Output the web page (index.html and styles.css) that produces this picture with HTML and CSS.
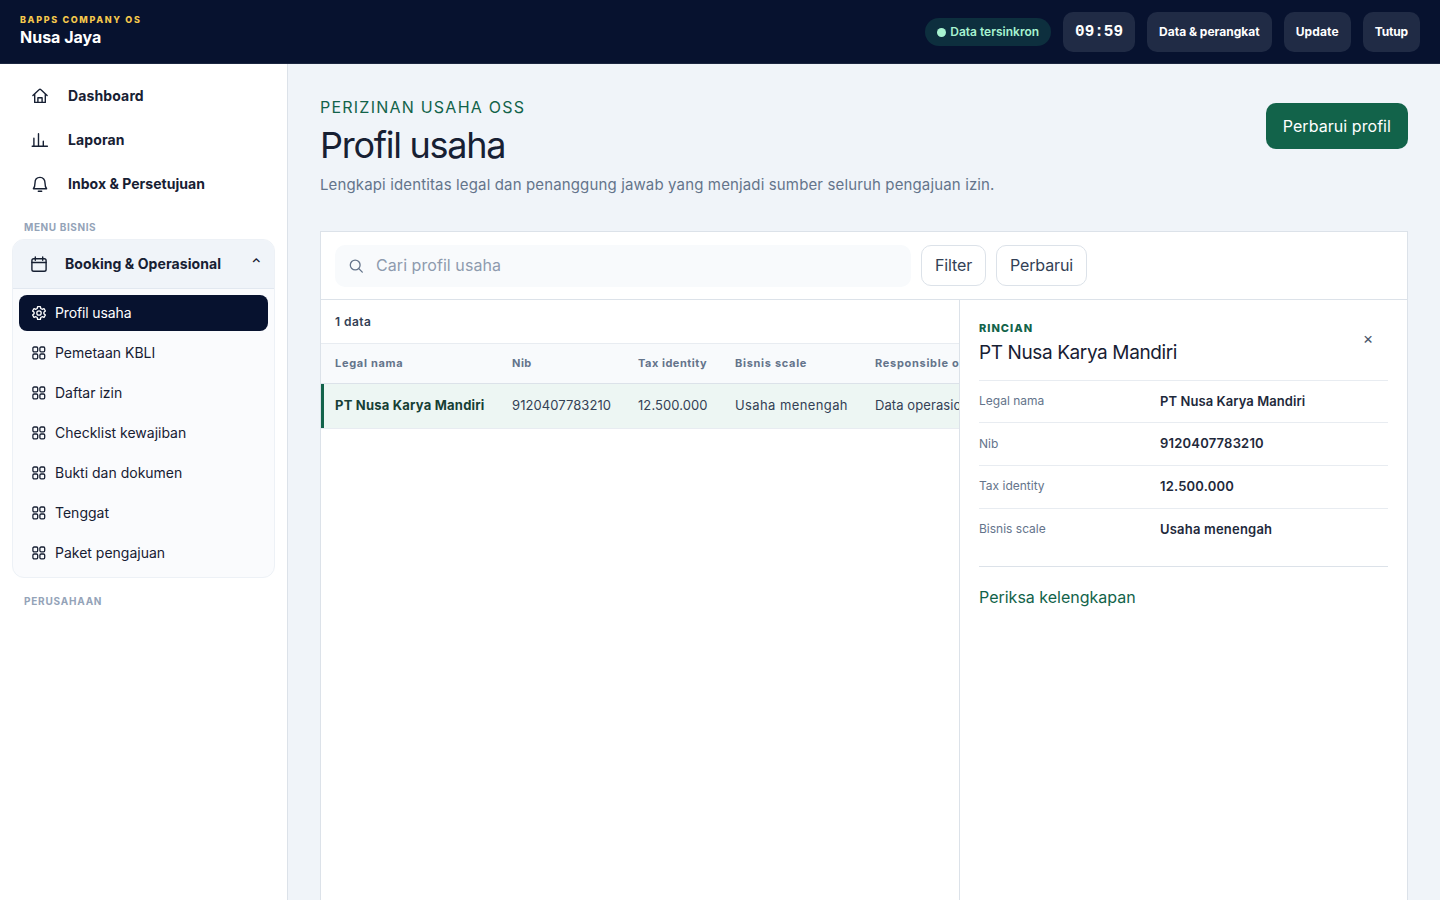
FILE: index.html
```html
<!DOCTYPE html>
<html lang="id">
<head>
    <meta charset="UTF-8">
    <meta name="viewport" content="width=device-width, initial-scale=1.0">
    <title>Profil usaha - Nusa Jaya</title>
    <link rel="stylesheet" href="styles.css">
</head>
<body>
    <svg class="sprite" aria-hidden="true">
        <symbol id="icon-grid" viewBox="0 0 16 16">
            <rect x="1.9" y="2" width="4.8" height="4.8" rx="1.2"/>
            <rect x="8.9" y="2" width="4.8" height="4.8" rx="1.2"/>
            <rect x="1.9" y="9" width="4.8" height="4.8" rx="1.2"/>
            <rect x="8.9" y="9" width="4.8" height="4.8" rx="1.2"/>
        </symbol>
    </svg>

    <header class="topbar">
        <div class="brand">
            <span>BAPPS COMPANY OS</span>
            <strong>Nusa Jaya</strong>
        </div>
        <div class="topbar-actions">
            <span class="sync"><i></i>Data tersinkron</span>
            <time class="clock">09:59</time>
            <button>Data &amp; perangkat</button>
            <button class="update">Update</button>
            <button class="close">Tutup</button>
        </div>
    </header>

    <div class="layout">
        <aside class="sidebar">
            <nav>
                <a class="nav-item" href="#dashboard">
                    <svg viewBox="0 0 18 18"><path d="M1.900 8.500 8.300 2.600a1 1 0 0 1 1.400 0l6.400 5.900M3.700 7.200v8.200h10.600V7.200M6.900 15.400v-4.700h4.200v4.700"/></svg>
                    Dashboard
                </a>
                <a class="nav-item" href="#laporan">
                    <svg viewBox="0 0 18 18"><path d="M1.200 15.200h15.200M2.900 15V7.200M7.500 15V2.800M12.300 15v-4.800"/></svg>
                    Laporan
                </a>
                <a class="nav-item tight" href="#inbox">
                    <svg viewBox="0 0 18 18"><path d="M2.400 13.700h13.200c-1.200-1.500-1.600-3-1.600-5.700C14 4.600 12.200 2.400 9 2.400S4 4.600 4 8c0 2.700-.4 4.200-1.600 5.700zM7.300 16.300h3.400"/></svg>
                    Inbox &amp; Persetujuan
                </a>
            </nav>

            <p class="nav-label">MENU BISNIS</p>
            <div class="group">
                <button class="group-head">
                    <svg viewBox="0 0 18 18"><rect x="1.900" y="3.800" width="14.200" height="12.400" rx="1.800"/><path d="M1.900 7.500h14.200M5.300 2v3.200M12.700 2v3.200"/></svg>
                    <span>Booking &amp; Operasional</span>
                    <b>⌃</b>
                </button>
                <div class="group-list">
                    <a class="active" href="#profil">
                        <svg viewBox="0 0 16 16"><path d="M6.600 1.600h2.800l.4 1.900 1.300.8 1.900-.7 1.400 2.400-1.500 1.300v1.400l1.500 1.300-1.400 2.400-1.900-.7-1.300.8-.4 1.900H6.600l-.4-1.900-1.300-.8-1.900.7-1.400-2.400 1.500-1.300V7.300L1.600 6 3 3.600l1.900.7 1.300-.8z"/><circle cx="8" cy="8" r="2.200"/></svg>
                        Profil usaha
                    </a>
                    <a href="#kbli"><svg><use href="#icon-grid"/></svg>Pemetaan KBLI</a>
                    <a href="#izin"><svg><use href="#icon-grid"/></svg>Daftar izin</a>
                    <a href="#checklist"><svg><use href="#icon-grid"/></svg>Checklist kewajiban</a>
                    <a href="#bukti"><svg><use href="#icon-grid"/></svg>Bukti dan dokumen</a>
                    <a href="#tenggat"><svg><use href="#icon-grid"/></svg>Tenggat</a>
                    <a href="#paket"><svg><use href="#icon-grid"/></svg>Paket pengajuan</a>
                </div>
            </div>
            <p class="nav-label company">PERUSAHAAN</p>
        </aside>

        <main>
            <div class="page-head">
                <div>
                    <p class="eyebrow">PERIZINAN USAHA OSS</p>
                    <h1>Profil usaha</h1>
                    <p class="lead">Lengkapi identitas legal dan penanggung jawab yang menjadi sumber seluruh pengajuan izin.</p>
                </div>
                <button class="primary">Perbarui profil</button>
            </div>

            <section class="panel">
                <div class="toolbar">
                    <label class="search">
                        <svg viewBox="0 0 16 16"><circle cx="7.200" cy="7" r="4.900"/><path d="m10.800 10.600 3.500 3.500"/></svg>
                        <input type="text" placeholder="Cari profil usaha">
                    </label>
                    <button>Filter</button>
                    <button>Perbarui</button>
                </div>
                <div class="split">
                    <div class="records">
                        <div class="count">1 data</div>
                        <table>
                            <thead>
                                <tr>
                                    <th>Legal nama</th>
                                    <th>Nib</th>
                                    <th>Tax identity</th>
                                    <th>Bisnis scale</th>
                                    <th>Responsible officer</th>
                                </tr>
                            </thead>
                            <tbody>
                                <tr>
                                    <td><strong>PT Nusa Karya Mandiri</strong></td>
                                    <td>9120407783210</td>
                                    <td>12.500.000</td>
                                    <td class="wide">Usaha menengah</td>
                                    <td>Data operasional</td>
                                </tr>
                            </tbody>
                        </table>
                    </div>
                    <div class="detail">
                        <div class="detail-head">
                            <div>
                                <span>RINCIAN</span>
                                <h2>PT Nusa Karya Mandiri</h2>
                            </div>
                            <button aria-label="Tutup rincian">×</button>
                        </div>
                        <dl>
                            <div><dt>Legal nama</dt><dd>PT Nusa Karya Mandiri</dd></div>
                            <div><dt>Nib</dt><dd>9120407783210</dd></div>
                            <div><dt>Tax identity</dt><dd>12.500.000</dd></div>
                            <div><dt>Bisnis scale</dt><dd>Usaha menengah</dd></div>
                        </dl>
                        <div class="detail-foot">
                            <a href="#periksa">Periksa kelengkapan</a>
                        </div>
                    </div>
                </div>
            </section>
        </main>
    </div>
</body>
</html>
```
FILE: styles.css
```css
:root {
    --navy: #07122f;
    --green: #12634a;
    --line: #dce2e9;
    --line-soft: #e8ecf1;
    --text: #172033;
    --muted: #64748b;
}

* {
    box-sizing: border-box;
}

body {
    margin: 0;
    height: 100vh;
    overflow: hidden;
    display: flex;
    flex-direction: column;
    font-family: Inter, sans-serif;
    font-size: 16px;
    color: var(--text);
    background: #f0f4f9;
}

p, h1, h2, dl, dd {
    margin: 0;
}

a {
    color: inherit;
    text-decoration: none;
}

button {
    font: inherit;
    cursor: pointer;
}

svg {
    flex: none;
    fill: none;
    stroke: currentColor;
    stroke-width: 1.3;
    stroke-linecap: round;
    stroke-linejoin: round;
}

.sprite {
    display: none;
}

/* Top bar */
.topbar {
    flex: none;
    height: 64px;
    padding: 0 20px;
    display: flex;
    align-items: center;
    justify-content: space-between;
    color: #fff;
    background: var(--navy);
    border-bottom: 1px solid #1b2640;
}

.brand span {
    display: block;
    margin-top: -3px;
    font-size: 9px;
    font-weight: 800;
    line-height: 12px;
    letter-spacing: 1.64px;
    color: #f5c84c;
}

.brand strong {
    display: block;
    margin-top: 1px;
    font-size: 16px;
    line-height: 20px;
}

.topbar-actions {
    display: flex;
    align-items: center;
    gap: 12px;
}

.topbar-actions button,
.clock {
    height: 40px;
    padding: 0 12px;
    border: 0;
    border-radius: 10px;
    color: #fff;
    background: #202b45;
    font-size: 12px;
    font-weight: 700;
}

.topbar-actions .update {
    letter-spacing: 0.12px;
}

.topbar-actions .close {
    letter-spacing: -0.14px;
}

.topbar-actions .clock {
    font-family: "Liberation Mono", monospace;
    font-size: 16px;
    line-height: 40px;
}

.sync {
    height: 28px;
    padding: 0 12px;
    display: flex;
    align-items: center;
    gap: 4px;
    border-radius: 14px;
    font-size: 12px;
    font-weight: 600;
    color: #a7f3d0;
    background: #0d2f3e;
}

.sync i {
    width: 9px;
    height: 9px;
    margin-top: 1px;
    border-radius: 50%;
    background: #a7f3d0;
}

/* Sidebar */
.layout {
    flex: 1;
    min-height: 0;
    display: flex;
}

.sidebar {
    flex: none;
    width: 288px;
    padding: 10px 12px;
    background: #fff;
    border-right: 1px solid var(--line);
}

.nav-item {
    height: 44px;
    padding: 0 0 2px 19px;
    display: flex;
    align-items: center;
    gap: 19px;
    font-size: 14px;
    font-weight: 700;
    letter-spacing: 0.13px;
}

.nav-item.tight {
    letter-spacing: 0.03px;
}

.nav-item svg,
.group-head svg {
    width: 18px;
    height: 18px;
    margin-top: 2px;
    stroke-width: 1.4;
}

.nav-label {
    padding: 15px 12px 6px;
    font-size: 10px;
    font-weight: 700;
    line-height: 12px;
    letter-spacing: 0.6px;
    color: #94a3b8;
}

.nav-label.company {
    padding-top: 17px;
    letter-spacing: 0.78px;
}

.group {
    border: 1px solid #edf1f6;
    border-radius: 12px;
    overflow: hidden;
    background: #fafbfd;
}

.group-head {
    width: 100%;
    height: 49px;
    padding: 0 13px 2px 17px;
    display: flex;
    align-items: center;
    border: 0;
    border-bottom: 1px solid #e2e8f0;
    background: #f0f4f9;
    color: var(--text);
    font-size: 14px;
    font-weight: 700;
    text-align: left;
}

.group-head span {
    flex: 1;
    margin-left: 17px;
    letter-spacing: 0.08px;
}

.group-head b {
    padding-bottom: 2px;
    font-size: 12px;
    font-weight: 600;
}

.group-list {
    padding: 6px;
    display: grid;
    gap: 4px;
}

.group-list a {
    height: 36px;
    padding: 0 12px 2px;
    display: flex;
    align-items: center;
    gap: 8px;
    border-radius: 8px;
    font-size: 14px;
}

.group-list svg {
    width: 16px;
    height: 16px;
    margin-top: 2px;
}

.group-list .active {
    color: #fff;
    background: var(--navy);
    letter-spacing: -0.13px;
}

/* Page */
main {
    flex: 1;
    min-width: 0;
    padding: 32px 32px 0;
    display: flex;
    flex-direction: column;
}

.page-head {
    height: 135px;
    display: flex;
    justify-content: space-between;
    align-items: flex-start;
}

.eyebrow {
    line-height: 22px;
    letter-spacing: 1.23px;
    color: var(--green);
}

h1 {
    margin: 5px 0 6px;
    font-size: 36px;
    font-weight: 400;
    line-height: 44px;
    letter-spacing: -1.27px;
}

.lead {
    font-size: 15px;
    line-height: 24px;
    letter-spacing: 0.137px;
    color: var(--muted);
}

.primary {
    height: 46px;
    margin-top: 7px;
    padding: 0 17px;
    border: 0;
    border-radius: 10px;
    color: #fff;
    background: var(--green);
    letter-spacing: 0.06px;
}

.panel {
    flex: 1;
    min-height: 0;
    display: flex;
    flex-direction: column;
    background: #fff;
    border: 1px solid var(--line);
    border-bottom: 0;
}

.toolbar {
    height: 68px;
    padding: 13px 14px 12px;
    display: flex;
    gap: 10px;
    border-bottom: 1px solid var(--line);
}

.toolbar button {
    height: 41px;
    padding: 0 13px 2px;
    border: 1px solid var(--line);
    border-radius: 10px;
    background: #fff;
    color: #334155;
    letter-spacing: -0.14px;
}

.search {
    width: 576px;
    height: 42px;
    padding: 0 13px;
    display: flex;
    align-items: center;
    gap: 12px;
    border-radius: 10px;
    background: #f8fafc;
    color: var(--muted);
}

.search svg {
    width: 16px;
    height: 16px;
}

.search input {
    flex: 1;
    padding: 0 0 2px;
    border: 0;
    outline: 0;
    background: none;
    font: inherit;
    letter-spacing: 0.06px;
}

.search input::placeholder {
    color: #8e9bae;
}

.split {
    flex: 1;
    min-height: 0;
    display: flex;
}

.records {
    width: 638px;
    overflow: hidden;
}

.count {
    height: 43px;
    padding: 0 14px;
    font-size: 12px;
    font-weight: 600;
    line-height: 43px;
    letter-spacing: 0.45px;
    color: #334155;
}

table {
    width: 760px;
    table-layout: fixed;
    border-collapse: separate;
    border-spacing: 0;
    white-space: nowrap;
}

th,
td {
    padding: 0 14px 2px;
    text-align: left;
}

th:nth-child(1) { width: 177px; }
th:nth-child(2) { width: 126px; }
th:nth-child(3) { width: 97px; }
th:nth-child(4) { width: 140px; }

th {
    height: 41px;
    font-size: 11px;
    font-weight: 700;
    letter-spacing: 0.7px;
    color: var(--muted);
    background: #f8fafc;
    border-top: 1px solid var(--line-soft);
    border-bottom: 1px solid var(--line);
}

th:nth-child(2),
th:nth-child(3) {
    letter-spacing: 0.5px;
}

td {
    height: 45px;
    font-size: 13px;
    letter-spacing: 0.08px;
    color: #334155;
    background: #edf6f3;
    border-bottom: 1px solid var(--line-soft);
}

td.wide {
    letter-spacing: 0.4px;
}

td:first-child {
    box-shadow: inset 3px 0 var(--green);
}

td strong {
    color: #173f35;
    letter-spacing: 0.21px;
}

/* Detail */
.detail {
    flex: 1;
    padding: 19px 19px 0 19px;
    border-left: 1px solid var(--line);
}

.detail-head {
    height: 61.8px;
    display: flex;
    justify-content: space-between;
    border-bottom: 1px solid var(--line-soft);
}

.detail-head span {
    display: block;
    font-size: 11px;
    font-weight: 800;
    line-height: 18px;
    letter-spacing: 1px;
    color: var(--green);
}

h2 {
    margin-top: 3px;
    font-size: 19px;
    font-weight: 400;
    line-height: 26px;
    letter-spacing: -0.39px;
}

.detail-head button {
    width: 40px;
    height: 40px;
    padding: 0 0 2px;
    border: 0;
    background: none;
    color: #475569;
}

dl div {
    height: 42.66px;
    padding-bottom: 2px;
    display: grid;
    grid-template-columns: 181px 1fr;
    align-items: center;
    border-bottom: 1px solid var(--line-soft);
}

dl div:last-child {
    padding-bottom: 3px;
    border-bottom: 0;
}

dt {
    font-size: 12px;
    color: var(--muted);
}

dd {
    font-size: 13px;
    font-weight: 600;
    letter-spacing: 0.2px;
    color: #1e293b;
}

dl div:first-child dd {
    letter-spacing: 0.07px;
}

.detail-foot {
    margin-top: 14.6px;
    padding-top: 19px;
    border-top: 1px solid var(--line);
    line-height: 22px;
    color: var(--green);
}
```
